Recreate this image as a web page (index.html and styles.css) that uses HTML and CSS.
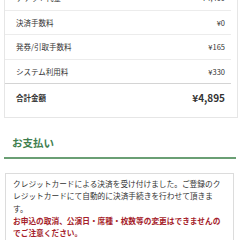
FILE: index.html
```html
<!DOCTYPE html>
<html lang="ja">
<head>
<meta charset="utf-8">
<link rel="stylesheet" href="styles.css">
</head>
<body>
<div class="page">
  <div class="card">
    <div class="row"><span class="label">チケット代金</span><span class="value">¥4,400</span></div>
    <div class="row"><span class="label">決済手数料</span><span class="value">¥0</span></div>
    <div class="row"><span class="label">発券/引取手数料</span><span class="value">¥165</span></div>
    <div class="row"><span class="label">システム利用料</span><span class="value">¥330</span></div>
    <div class="total"><span class="label">合計金額</span><span class="amount">¥4,895</span></div>
  </div>
  <h2 class="heading">お支払い</h2>
  <div class="notice">
    <p class="msg">クレジットカードによる決済を受け付けました。ご登録のク<br>レジットカードにて自動的に決済手続きを行わせて頂きま<br>す。</p>
    <p class="warn">お申込の取消、公演日・席種・枚数等の変更はできませんの<br>でご注意ください。</p>
  </div>
</div>
</body>
</html>
```

FILE: styles.css
```css
html, body {
  margin: 0;
  padding: 0;
  background: #fff;
}
body {
  font-family: "Noto Sans CJK JP", "Noto Sans", sans-serif;
  color: #333;
  width: 240px;
  overflow: hidden;
}
.page {
  margin-top: -15px;
}
.card {
  margin: 0 2px 0 4px;
  border: 1px solid #e6e6e6;
  padding: 0 6px 6px 0;
}
.row {
  display: flex;
  justify-content: space-between;
  align-items: center;
  height: 23.5px;
  border-bottom: 1px solid #ececec;
  font-size: 7.5px;
  padding: 0 6px 0 11px;
}
.total {
  display: flex;
  justify-content: space-between;
  align-items: center;
  height: 27px;
  border-top: 1px solid #d4d4d4;
  margin-top: -1px;
  padding: 0 6px 0 11px;
  font-size: 7.5px;
  font-weight: bold;
}
.amount {
  font-size: 10px;
  font-weight: bold;
}
.heading {
  margin: 17px 4px 0 4px;
  padding: 0 0 6px 8px;
  font-size: 10.5px;
  line-height: 16px;
  font-weight: bold;
  color: #3f7f4f;
  border-bottom: 2px solid #6a9f74;
}
.notice {
  margin: 14px 6px 0 5px;
  border: 1px solid #dcdcdc;
  padding: 4px 3px 6px 7px;
  font-size: 7.7px;
  line-height: 12.3px;
  overflow: hidden;
}
.notice p {
  margin: 0;
  white-space: nowrap;
}
.warn {
  color: #a51d2a;
  font-weight: bold;
}
```
